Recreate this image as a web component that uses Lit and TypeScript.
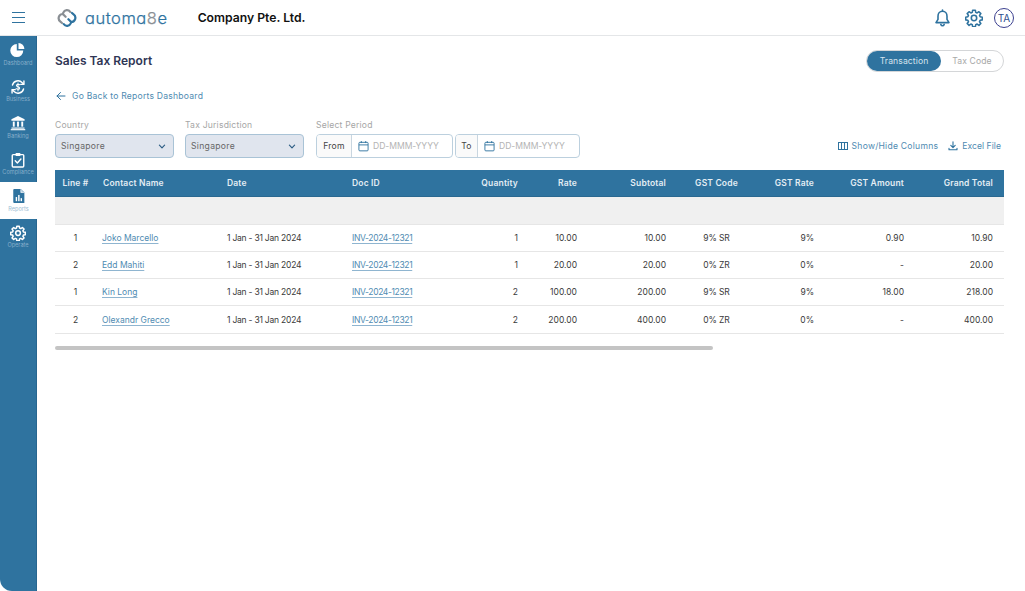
import { LitElement, html, css, svg } from "lit";
import { customElement } from "lit/decorators.js";

const gearPath = "M10.2 1.6h3.6l.5 2.9 1.9.8 2.4-1.7 2.5 2.5-1.7 2.4.8 1.9 2.9.5v3.6l-2.9.5-.8 1.9 1.7 2.4-2.5 2.5-2.4-1.7-1.9.8-.5 2.9h-3.6l-.5-2.9-1.9-.8-2.4 1.7-2.5-2.5 1.7-2.4-.8-1.9-2.9-.5v-3.6l2.9-.5.8-1.9-1.7-2.4 2.5-2.5 2.4 1.7 1.9-.8z";

const navIcons: Record<string, any> = {
  Dashboard: svg`<path d="M7.2 2.2v6.9h6.9A6.9 6.9 0 1 1 7.2 2.2z" fill="#fff"/><path d="M9 1v6.4h6.3A6.4 6.4 0 0 0 9 1z" fill="#fff"/>`,
  Business: svg`<g fill="none" stroke="#fff" stroke-width="1.5" stroke-linecap="round" stroke-linejoin="round"><path d="M2.6 6.4A6.1 6.1 0 0 1 13 3.9l1.5 1.6"/><path d="M14.8 2.2v3.5h-3.4"/><path d="M14.4 10.6A6.1 6.1 0 0 1 4 13.1l-1.5-1.6"/><path d="M2.2 14.8v-3.5h3.4"/><path d="M10.4 6.2c-.5-.8-3.4-1.2-3.6.5-.2 1.9 3.6 1 3.5 3-.1 1.6-3 1.4-3.8.4M8.5 4.4v8.2" stroke-width="1.1"/></g>`,
  Banking: svg`<g fill="#fff"><path d="M8.5 1 1.5 4.6v1.4h14V4.6z"/><rect x="3" y="7" width="2" height="5.4"/><rect x="7.5" y="7" width="2" height="5.4"/><rect x="12" y="7" width="2" height="5.4"/><rect x="1.6" y="13.3" width="13.8" height="1.2"/><rect x=".8" y="15" width="15.4" height="1.2"/></g>`,
  Compliance: svg`<g fill="none" stroke="#fff" stroke-width="1.5"><rect x="2.4" y="2.8" width="12.2" height="13.2" rx="1"/><path d="M5.6 9.4 7.8 11.6 11.6 7.4" stroke-linecap="round" stroke-linejoin="round"/></g><rect x="6" y="1" width="5" height="3.2" rx=".6" fill="#fff"/>`,
  Reports: svg`<path d="M3.4 1h7l3.8 3.8V16H3.4A1 1 0 0 1 2.4 15V2A1 1 0 0 1 3.4 1z" fill="#2f739f"/><path d="M10.4 1.4v3.4h3.4" fill="#bcd3e3" stroke="#fff" stroke-width=".7"/><g fill="#fff"><rect x="5" y="9.6" width="1.5" height="4.4"/><rect x="7.6" y="7.4" width="1.5" height="6.6"/><rect x="10.2" y="10.8" width="1.5" height="3.2"/></g>`,
  Operate: svg`<g transform="scale(.7) translate(.2 .2)" fill="none" stroke="#fff" stroke-width="2.3" stroke-linejoin="round"><circle cx="12" cy="12" r="3.6"/><path d="${gearPath}"/></g>`,
};
const nav = ["Dashboard", "Business", "Banking", "Compliance", "Reports", "Operate"];

const gear = html`<svg class="gear" viewBox="0 0 24 24" fill="none" stroke="#2f739f" stroke-width="2.1" stroke-linejoin="round"><circle cx="12" cy="12" r="3.6"/><path d="${gearPath}"/></svg>`;

const chevron = html`<svg class="chev" viewBox="0 0 8 5" fill="none" stroke="#2f5f86" stroke-width="1.2" stroke-linecap="round" stroke-linejoin="round"><path d="M1.4 1.2 4 3.8l2.6-2.6"/></svg>`;
const cal = html`<svg class="cal" viewBox="0 0 12 12" fill="none" stroke="#2f739f" stroke-width="1"><rect x="1" y="2" width="10" height="9.3" rx="1"/><path d="M1 4.8h10M3.6.6v2.2M8.4.6v2.2"/></svg>`;

const rows = [
  ["1", "Joko Marcello", "1", "10.00", "10.00", "9% SR", "9%", "0.90", "10.90"],
  ["2", "Edd Mahiti", "1", "20.00", "20.00", "0% ZR", "0%", "-", "20.00"],
  ["1", "Kin Long", "2", "100.00", "200.00", "9% SR", "9%", "18.00", "218.00"],
  ["2", "Olexandr Grecco", "2", "200.00", "400.00", "0% ZR", "0%", "-", "400.00"],
];

@customElement("app-root")
export class AppRoot extends LitElement {
  static styles = css`
    :host { display: block; width: 1025px; height: 591px; overflow: hidden; background: #fff;
      font-family: "Inter", "Liberation Sans", sans-serif; color: #333; }
    * { box-sizing: border-box; }
    .top { height: 36px; display: flex; align-items: center; border-bottom: 1px solid #e4e6e8; padding-left: 12px; padding-right: 11px; }
    .burger { width: 13px; height: 12px; display: flex; flex-direction: column; justify-content: space-between; }
    .burger i { display: block; height: 1.4px; background: #2f739f; }
    .logo { display: flex; align-items: center; margin-left: 32px; gap: 8px; }
    .logo svg { width: 20px; height: 20px; }
    .word { font-size: 16.5px; font-weight: 300; letter-spacing: .55px; color: #2f739f; font-feature-settings: "cv11"; -webkit-text-stroke: .25px #2f739f; }
    .word b { font-weight: 300; color: #8a8f94; -webkit-text-stroke: .25px #8a8f94; }
    .company { margin-left: 30px; font-size: 12.2px; font-weight: 600; color: #111; }
    .tools { margin-left: auto; display: flex; align-items: center; }
    .bell { width: 17px; height: 18px; margin-right: 14px; margin-left: -1px; }
    .gear { width: 18px; height: 18px; margin-right: 11px; }
    .avatar { width: 20px; height: 20px; border-radius: 50%; border: 1px solid #3b3f8f; color: #2f4f8f; font-size: 10px; display: flex; align-items: center; justify-content: center; }
    .body { display: flex; height: 555px; }
    .side { width: 37px; flex: none; background: #2f739f; border-right: 1px solid #286690; border-bottom-left-radius: 12px; }
    .item { height: 36.6px; display: flex; flex-direction: column; align-items: center; padding-top: 6px; color: #86aeca; font-size: 5.6px; line-height: 7px; gap: 1.5px; }
    .item svg { width: 16px; height: 16px; flex: none; }
    .item.on { background: #fff; color: #9dbdd3; width: 37px; }
    .main { flex: 1; padding: 14px 21px 0 18px; min-width: 0; }
    .head { display: flex; align-items: center; justify-content: space-between; height: 22px; }
    h1 { margin: 0 0 2px; font-size: 12px; font-weight: 600; color: #2f3655; }
    .toggle { width: 138px; height: 22px; border: 1px solid #d4d6d8; border-radius: 11px; display: flex; font-size: 8.6px; letter-spacing: .1px; color: #a8a8a8; align-items: center; }
    .toggle .a { width: 74px; height: 20px; border-radius: 10px; background: #2f739f; color: #d6e4ee; display: flex; align-items: center; justify-content: center; }
    .toggle .b { flex: 1; text-align: center; }
    .back { display: flex; align-items: center; margin-top: 18px; height: 12px; font-size: 8.6px; letter-spacing: .22px; color: #4f8bb2; gap: 6px; padding-left: 1px; }
    .back svg { width: 10px; height: 10px; }
    .filters { display: flex; margin-top: 18px; align-items: flex-end; height: 38px; }
    .field { display: flex; flex-direction: column; gap: 4px; }
    .field label { font-size: 8.6px; letter-spacing: .2px; color: #a6a6a6; line-height: 10px; }
    .sel { width: 119px; height: 24px; background: #e0e5ee; border: 1px solid #a9c3d6; border-radius: 4px; display: flex; align-items: center; justify-content: space-between; padding: 0 7px 0 5px; font-size: 8.6px; letter-spacing: .3px; color: #666; }
    .chev { width: 8px; height: 5px; }
    .f2 { margin-left: 11px; }
    .f3 { margin-left: 12px; }
    .dates { display: flex; gap: 2px; }
    .date { height: 24px; display: flex; border: 1px solid #bcd0de; border-radius: 4px; font-size: 8.6px; align-items: center; overflow: hidden; }
    .date .pre { height: 100%; display: flex; align-items: center; justify-content: center; background: #fafafa; border-right: 1px solid #c9d6e0; color: #444; letter-spacing: .2px; }
    .date .ph { display: flex; align-items: center; gap: 4px; color: #b4b4b4; padding-left: 6px; letter-spacing: -.05px; }
    .cal { width: 11px; height: 12px; }
    .d1 { width: 137px; } .d1 .pre { width: 35px; }
    .d2 { width: 125px; } .d2 .pre { width: 22px; }
    .acts { margin-left: auto; display: flex; align-items: center; gap: 10px; height: 24px; font-size: 8.6px; letter-spacing: .24px; color: #4f8bb2; padding-right: 3px; }
    .acts span { display: flex; align-items: center; gap: 4px; }
    .acts span.xl { letter-spacing: .04px; }
    .acts svg { width: 10px; height: 10px; }
    table { width: 949px; table-layout: fixed; border-collapse: collapse; margin-top: 12px; font-size: 8.5px; color: #3a3a3a; }
    th { background: #2f739f; height: 26px; font-weight: 600; color: #e3edf4; padding: 0 7px; border-bottom: 1px solid #2a6890; letter-spacing: .17px; }
    td { height: 27.3px; padding: 0 7px; border-bottom: 1px solid #e6e6e6; }
    .gray td { background: #f0f0f0; height: 28px; }
    .l { text-align: left; } .r { text-align: right; } .c { text-align: center; }
    td a { color: #4f8bb2; text-decoration: underline; text-decoration-color: #8fb5d0; text-decoration-thickness: .7px; text-underline-offset: 1.5px; }
    td a.name { margin-left: -1px; }
    td .dt { letter-spacing: -.22px; }
    td a.doc { letter-spacing: -.36px; }
    .code { letter-spacing: -.1px; }
    .last { padding-right: 11px; }
    .scroll { width: 658px; height: 4px; background: #c4c4c4; border-radius: 2px; margin-top: 12px; }
  `;

  render() {
    return html`
      <div class="top">
        <div class="burger"><i></i><i></i><i></i></div>
        <div class="logo">
          <svg viewBox="0 0 20 20" fill="none" stroke-width="2.2" stroke-linecap="round" stroke-linejoin="round">
            <path d="M13.2 3.8A4 4 0 0 0 6.3 4.6L5.8 6A4.2 4.2 0 0 0 3.4 13.6L5 15M5.8 6 8.6 8.8" stroke="#8a8f94"/>
            <path d="M6.8 16.2A4 4 0 0 0 13.7 15.4L14.2 14A4.2 4.2 0 0 0 16.6 6.4L15 5M14.2 14 11.4 11.2" stroke="#2f739f"/>
          </svg>
          <span class="word">automa<b>8</b>e</span>
        </div>
        <div class="company">Company Pte. Ltd.</div>
        <div class="tools">
          <svg class="bell" viewBox="0 0 17 18" fill="none" stroke="#2f739f" stroke-width="1.6" stroke-linejoin="round"><path d="M8.5 2.2c-3 0-4.5 2.2-4.5 5v3.2L2 13.6h13l-2-3.2V7.2c0-2.8-1.5-5-4.5-5z"/><path d="M6.8 15.4c.4 1 1 1.4 1.7 1.4s1.3-.4 1.7-1.4M8.5 1v1.2" stroke-linecap="round"/></svg>
          ${gear}
          <div class="avatar">TA</div>
        </div>
      </div>
      <div class="body">
        <div class="side">
          ${nav.map((n) => html`<div class="item ${n === "Reports" ? "on" : ""}"><svg viewBox="0 0 17 17">${navIcons[n]}</svg><span>${n}</span></div>`)}
        </div>
        <div class="main">
          <div class="head">
            <h1>Sales Tax Report</h1>
            <div class="toggle"><div class="a">Transaction</div><div class="b">Tax Code</div></div>
          </div>
          <div class="back">
            <svg viewBox="0 0 10 10" fill="none" stroke="#2f739f" stroke-width="1" stroke-linecap="round" stroke-linejoin="round"><path d="M9 5H1M4.5 1.5 1 5l3.5 3.5"/></svg>
            Go Back to Reports Dashboard
          </div>
          <div class="filters">
            <div class="field"><label>Country</label><div class="sel">Singapore ${chevron}</div></div>
            <div class="field f2"><label>Tax Jurisdiction</label><div class="sel">Singapore ${chevron}</div></div>
            <div class="field f3"><label>Select Period</label>
              <div class="dates">
                <div class="date d1"><div class="pre">From</div><div class="ph">${cal}DD-MMM-YYYY</div></div>
                <div class="date d2"><div class="pre">To</div><div class="ph">${cal}DD-MMM-YYYY</div></div>
              </div>
            </div>
            <div class="acts">
              <span><svg viewBox="0 0 10 10" fill="none" stroke="#2f739f" stroke-width="1"><rect x=".5" y="1.5" width="9" height="7"/><path d="M3.5 1.5v7M6.5 1.5v7"/></svg>Show/Hide Columns</span>
              <span class="xl"><svg viewBox="0 0 10 10" fill="none" stroke="#2f739f" stroke-width="1.1" stroke-linecap="round" stroke-linejoin="round"><path d="M5 .8v5.6M2.8 4.4 5 6.6l2.2-2.2M1 7.2v1.6h8V7.2"/></svg>Excel File</span>
            </div>
          </div>
          <table>
            <colgroup>
              ${[41, 124, 125, 125, 55, 59, 89, 87, 61, 90, 93].map((w) => html`<col style="width:${w}px" />`)}
            </colgroup>
            <thead><tr>
              <th class="c">Line #</th><th class="l">Contact Name</th><th class="l">Date</th><th class="l">Doc ID</th>
              <th class="r">Quantity</th><th class="r">Rate</th><th class="r">Subtotal</th><th class="c">GST Code</th>
              <th class="r">GST Rate</th><th class="r">GST Amount</th><th class="r last">Grand Total</th>
            </tr></thead>
            <tbody>
              <tr class="gray"><td colspan="11"></td></tr>
              ${rows.map((r) => html`<tr>
                <td class="c">${r[0]}</td><td class="l"><a class="name">${r[1]}</a></td><td class="l"><span class="dt">1 Jan - 31 Jan 2024</span></td><td class="l"><a class="doc">INV-2024-12321</a></td>
                <td class="r">${r[2]}</td><td class="r">${r[3]}</td><td class="r">${r[4]}</td><td class="c code">${r[5]}</td>
                <td class="r">${r[6]}</td><td class="r">${r[7]}</td><td class="r last">${r[8]}</td>
              </tr>`)}
            </tbody>
          </table>
          <div class="scroll"></div>
        </div>
      </div>
    `;
  }
}
